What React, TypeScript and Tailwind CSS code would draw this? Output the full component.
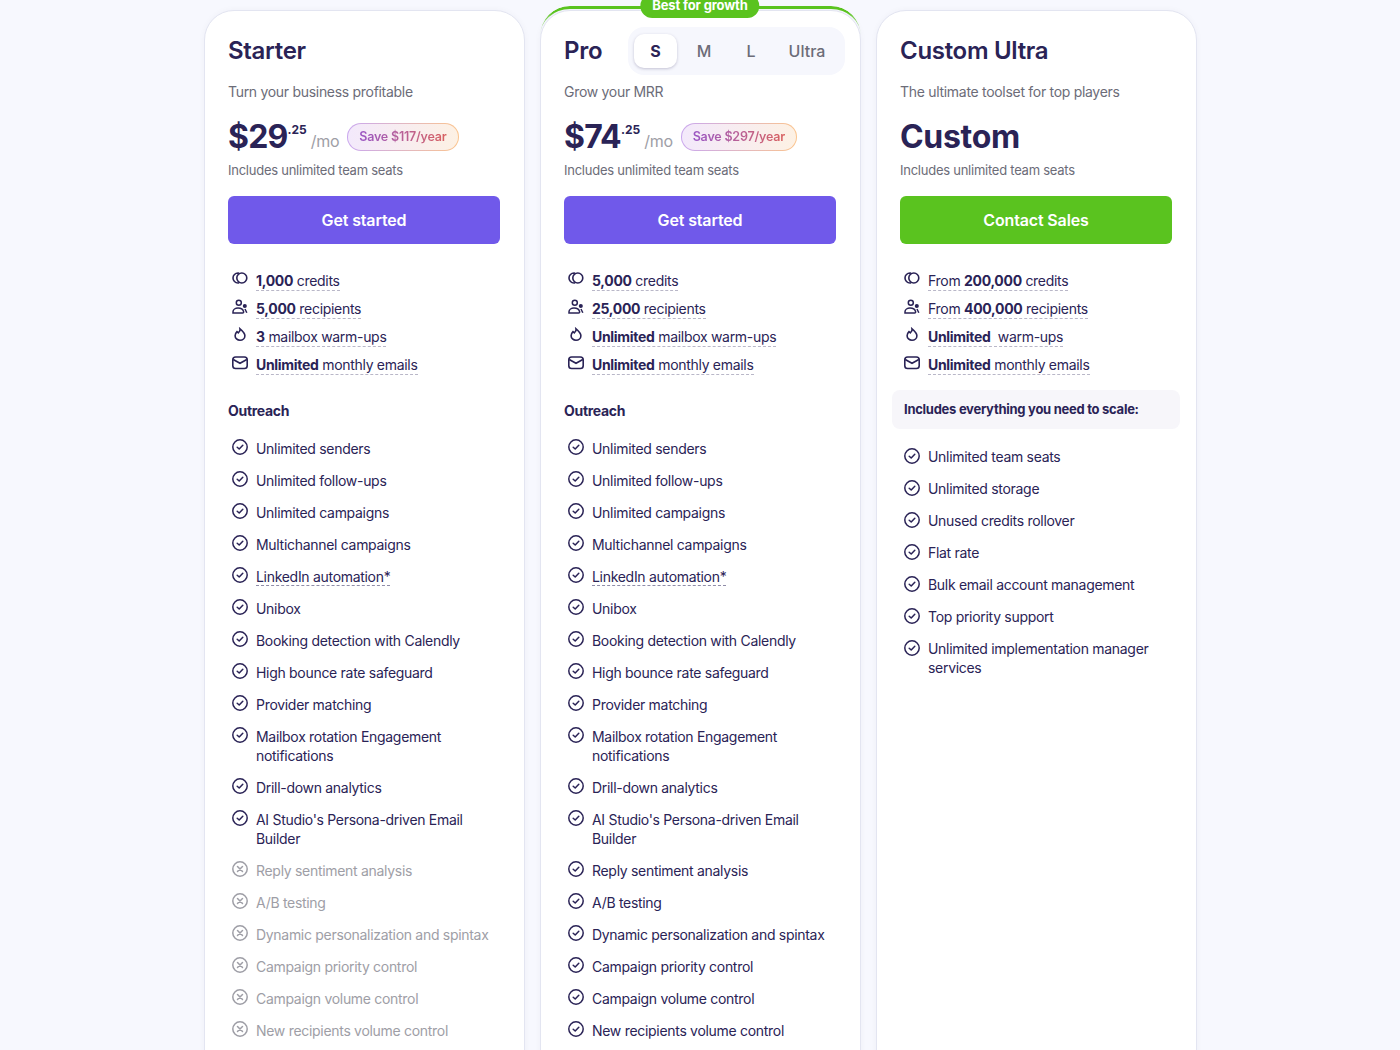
import React from "react";

const Cr = () => (
  <svg width="16" height="16" viewBox="0 0 16 16" fill="none" stroke="#2a2356" strokeWidth="1.6" className="absolute left-0 top-0">
    <circle cx="9.8" cy="7" r="5" />
    <path d="M7 2.2A5 5 0 0 0 6 2 5 5 0 0 0 6 12a5 5 0 0 0 1-.2" />
  </svg>
);
const People = () => (
  <svg width="16" height="16" viewBox="0 0 16 16" fill="none" stroke="#2a2356" strokeWidth="1.5" className="absolute left-0 top-0">
    <circle cx="6.800" cy="3.800" r="2.500" />
    <path d="M1 14v-1.200C1 10.500 3.500 9 6 9c2.500 0 5 1.200 5.600 3.600.2.8-.2 1.400-1 1.400z" />
    <circle cx="12.800" cy="7" r="1.300" fill="#2a2356" />
    <path d="M13 10l1.800 3.800" />
  </svg>
);
const Flame = () => (
  <svg width="16" height="16" viewBox="0 0 16 16" fill="none" stroke="#2a2356" strokeWidth="1.6" className="absolute left-0 top-0">
    <path d="M8 1.800c.4 2.200-.9 3-1.700 4L5 4.600C3.800 5.800 3.100 7.200 3.100 8.700a4.900 4.600 0 0 0 9.800 0C12.900 6 10.400 3.800 8 1.800z" />
  </svg>
);
const Mail = () => (
  <svg width="16" height="16" viewBox="0 0 16 16" fill="none" stroke="#2a2356" strokeWidth="1.6" className="absolute left-0 top-0">
    <rect x="0.8" y="2" width="14.400" height="11.500" rx="2.800" />
    <path d="M1.200 4.500 8 8.300l6.800-3.800" />
  </svg>
);
const Check = () => (
  <svg width="16" height="16" viewBox="0 0 16 16" fill="none" stroke="#2a2356" strokeWidth="1.5" className="absolute left-0 top-0">
    <circle cx="8" cy="8" r="7.200" />
    <path d="M5.200 8.200 7.200 10l3.600-3.800" strokeLinecap="round" strokeLinejoin="round" />
  </svg>
);
const Cross = () => (
  <svg width="16" height="16" viewBox="0 0 16 16" fill="none" stroke="#9e9ea6" strokeWidth="1.5" className="absolute left-0 top-0">
    <circle cx="8" cy="8" r="7.200" />
    <path d="M5.500 5.500l5 5M10.500 5.500l-5 5" strokeLinecap="round" />
  </svg>
);

type Stat = { icon: React.ReactNode; text: React.ReactNode };
const B = ({ children }: { children: React.ReactNode }) => <b className="font-bold">{children}</b>;

const StatRows = ({ stats }: { stats: Stat[] }) => (
  <div className="mt-[23px] flex flex-col">
    {stats.map((s, i) => (
      <div key={i} className="relative h-[28px] pl-7 pt-[4px] text-[14px] leading-[20px] text-[#2a2356]">
        <span className="absolute left-1 top-[4px] block h-4 w-4">{s.icon}</span>
        <span className="inline-block h-[20px] border-b border-dashed border-[#b9b7c8] leading-[19px]">{s.text}</span>
      </div>
    ))}
  </div>
);

const Feat = ({ label, off, low }: { label: string; off?: boolean; low?: boolean }) => (
  <li className={`relative pb-[7px] pl-7 pt-[6px] text-[14px] leading-[19px] ${off ? "text-[#9e9ea6]" : "text-[#2a2356]"}`}>
    <span className={`absolute left-1 block h-4 w-4 ${low ? "top-[7px]" : "top-[6px]"}`}>{off ? <Cross /> : <Check />}</span>
    {label === "LinkedIn automation*" ? (
      <span className="border-b border-dashed border-[#8f8ca8]">{label}</span>
    ) : (
      label
    )}
  </li>
);

const outreach = [
  "Unlimited senders",
  "Unlimited follow-ups",
  "Unlimited campaigns",
  "Multichannel campaigns",
  "LinkedIn automation*",
  "Unibox",
  "Booking detection with Calendly",
  "High bounce rate safeguard",
  "Provider matching",
  "Mailbox rotation Engagement notifications",
  "Drill-down analytics",
  "AI Studio's Persona-driven Email Builder",
];
const extras = [
  "Reply sentiment analysis",
  "A/B testing",
  "Dynamic personalization and spintax",
  "Campaign priority control",
  "Campaign volume control",
  "New recipients volume control",
];
const ultra = [
  "Unlimited team seats",
  "Unlimited storage",
  "Unused credits rollover",
  "Flat rate",
  "Bulk email account management",
  "Top priority support",
  "Unlimited implementation manager services",
];

const Price = ({ whole, save }: { whole: string; save: string }) => (
  <div className="mt-[15px] flex h-[40px] items-center text-[#2a2356]">
    <span className="text-[32px] font-bold leading-[40px] tracking-[-0.8px]">{whole}</span>
    <span className="mb-[15px] text-[12px] font-bold leading-[14px] tracking-normal">.25</span>
    <span className="ml-[4px] mt-[7px] text-[16px] leading-[20px] text-[#9e9ea6]">/mo</span>
    <span className="ml-[8px] h-[28px] rounded-full bg-gradient-to-r from-[#c9a6ee] to-[#fbc48d] p-px">
      <span className="flex h-[26px] items-center rounded-full bg-gradient-to-r from-[#f3e9fb] to-[#fdf1e4] px-[11px] text-[12.5px] font-semibold tracking-[-0.2px]">
        <span className="bg-gradient-to-r from-[#9a55c4] to-[#d9615f] bg-clip-text text-transparent">{save}</span>
      </span>
    </span>
  </div>
);

const Includes = () => <p className="mt-[4px] text-[13px] leading-[19px] tracking-[-0.25px] text-[#6c6c78]">Includes unlimited team seats</p>;

const Cta = ({ label, green }: { label: string; green?: boolean }) => (
  <button className={`mt-[16px] flex h-[48px] w-full items-center justify-center rounded-[6px] text-[16px] font-semibold tracking-[-0.15px] text-white ${green ? "bg-[#5ac31f]" : "bg-[#7059ea]"}`}>
    {label}
  </button>
);

const cardCls = "relative h-[1100px] w-[321px] rounded-t-[30px] border border-[#e3e5f1] bg-white px-[23.5px] pt-4 shadow-[0_0_6px_rgba(42,35,86,0.04)]";

export default function App() {
  const statsA: Stat[] = [
    { icon: <Cr />, text: <><B>1,000</B> credits</> },
    { icon: <People />, text: <><B>5,000</B> recipients</> },
    { icon: <Flame />, text: <><B>3</B> mailbox warm-ups</> },
    { icon: <Mail />, text: <><B>Unlimited</B> monthly emails</> },
  ];
  const statsB: Stat[] = [
    { icon: <Cr />, text: <><B>5,000</B> credits</> },
    { icon: <People />, text: <><B>25,000</B> recipients</> },
    { icon: <Flame />, text: <><B>Unlimited</B> mailbox warm-ups</> },
    { icon: <Mail />, text: <><B>Unlimited</B> monthly emails</> },
  ];
  const statsC: Stat[] = [
    { icon: <Cr />, text: <>From <B>200,000</B> credits</> },
    { icon: <People />, text: <>From <B>400,000</B> recipients</> },
    { icon: <Flame />, text: <><B>Unlimited</B>&nbsp; warm-ups</> },
    { icon: <Mail />, text: <><B>Unlimited</B> monthly emails</> },
  ];
  return (
    <div className="h-[1050px] overflow-hidden bg-[#f7f8fe] pt-[10px] font-['Inter',sans-serif] tracking-[-0.3px]">
      <div className="flex justify-center gap-[15px]">
        {/* Starter */}
        <div className={cardCls}>
          <div className="flex h-12 items-center">
            <h2 className="text-[24px] font-semibold leading-[32px] text-[#2a2356]">Starter</h2>
          </div>
          <p className="mt-[7px] text-[14px] leading-[20px] text-[#6c6c78]">Turn your business profitable</p>
          <Price whole="$29" save="Save $117/year" />
          <Includes />
          <Cta label="Get started" />
          <StatRows stats={statsA} />
          <h3 className="mt-[22px] text-[14px] font-bold leading-[20px] text-[#2a2356]">Outreach</h3>
          <ul className="mt-[12px]">
            {outreach.map((f) => <Feat key={f} label={f} />)}
            {extras.map((f) => <Feat key={f} label={f} off />)}
          </ul>
        </div>
        {/* Pro */}
        <div className={cardCls}>
          <div className="absolute -left-px -right-px -top-[5px] h-[60px] rounded-t-[30px] border-t-[3px] border-[#5ac31f] [mask-image:linear-gradient(to_bottom,black_6px,transparent_30px)]" />
          <div className="absolute -top-[17px] left-1/2 flex h-[24px] -translate-x-1/2 items-center rounded-[12px] bg-[#5ac31f] px-3 text-[13px] font-bold tracking-[-0.15px] text-white">
            Best for growth
          </div>
          <div className="flex h-12 items-center justify-between">
            <h2 className="text-[24px] font-semibold leading-[32px] text-[#2a2356]">Pro</h2>
            <div className="-mr-[9px] flex h-12 w-[217px] items-center rounded-[16px] bg-[#f6f7fd] pl-[6px] text-[16px] font-medium tracking-normal text-[#6c6c78]">
              <span className="flex h-[34px] w-[43px] items-center justify-center rounded-[10px] bg-white font-bold text-[#2a2356] shadow-[0_1px_3px_rgba(42,35,86,0.25)]">S</span>
              <span className="ml-[6px] flex w-[42px] justify-center">M</span>
              <span className="ml-[5px] flex w-[42px] justify-center">L</span>
              <span className="ml-[11px] flex w-[48px] justify-center">Ultra</span>
            </div>
          </div>
          <p className="mt-[7px] text-[14px] leading-[20px] text-[#6c6c78]">Grow your MRR</p>
          <Price whole="$74" save="Save $297/year" />
          <Includes />
          <Cta label="Get started" />
          <StatRows stats={statsB} />
          <h3 className="mt-[22px] text-[14px] font-bold leading-[20px] text-[#2a2356]">Outreach</h3>
          <ul className="mt-[12px]">
            {outreach.map((f) => <Feat key={f} label={f} />)}
            {extras.map((f) => <Feat key={f} label={f} />)}
          </ul>
        </div>
        {/* Ultra */}
        <div className={cardCls}>
          <div className="flex h-12 items-center">
            <h2 className="text-[24px] font-semibold leading-[32px] text-[#2a2356]">Custom Ultra</h2>
          </div>
          <p className="mt-[7px] text-[14px] leading-[20px] text-[#6c6c78]">The ultimate toolset for top players</p>
          <div className="mt-[15px] h-[40px] text-[32px] font-bold leading-[40px] text-[#2a2356]">Custom</div>
          <Includes />
          <Cta label="Contact Sales" green />
          <StatRows stats={statsC} />
          <div className="-mx-2 mt-[11px] flex h-[39px] items-center rounded-[8px] bg-[#f7f6fa] px-3 text-[13px] font-bold tracking-[-0.27px] text-[#2a2356]">
            Includes everything you need to scale:
          </div>
          <ul className="mt-[12px]">
            {ultra.map((f) => <Feat key={f} label={f} low />)}
          </ul>
        </div>
      </div>
    </div>
  );
}
